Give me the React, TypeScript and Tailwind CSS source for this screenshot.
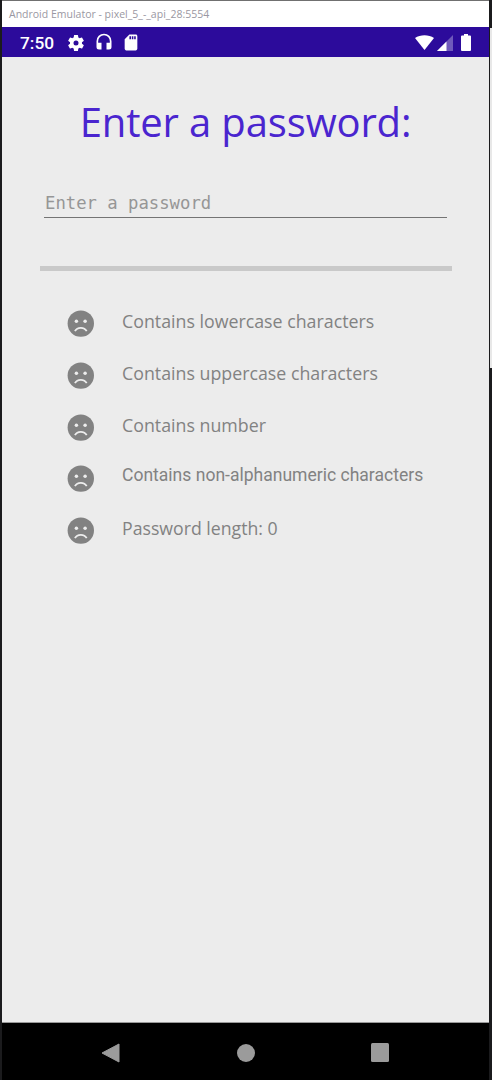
import React from "react";

const rules = [
  { label: "Contains lowercase characters", text: "font-['Open_Sans',sans-serif] text-[17.8px] -mt-[5px]" },
  { label: "Contains uppercase characters", text: "font-['Open_Sans',sans-serif] text-[17.8px] -mt-[5px]" },
  { label: "Contains number", text: "font-['Open_Sans',sans-serif] text-[17.8px] -mt-[5px]" },
  { label: "Contains non-alphanumeric characters", text: "font-[Roboto,sans-serif] text-[17.55px] -mt-[8px]" },
  { label: "Password length: 0", text: "font-['Open_Sans',sans-serif] text-[17.7px] -mt-[5px]" },
];

function SadFace() {
  return (
    <svg viewBox="0 0 27 27" className="block h-[27px] w-[27px] shrink-0">
      <circle cx="13.8" cy="13.6" r="13.2" fill="#828282" />
      <circle cx="9.4" cy="11.2" r="1.75" fill="#ededed" />
      <circle cx="18.1" cy="11.2" r="1.75" fill="#ededed" />
      <path d="M7.9 21.2C10.2 16.7 17.4 16.7 19.7 21.2" fill="none" stroke="#ededed" strokeWidth="1.7" />
    </svg>
  );
}

function StatusBar() {
  return (
    <div className="flex h-[30px] items-center bg-[#2c0b9b] pl-[18px] pr-[18px] text-white">
      <span className="w-[46px] pt-px font-[Roboto,sans-serif] text-[17.3px] font-medium leading-[30px]">7:50</span>
      <svg viewBox="0 0 24 24" className="mt-px h-[20px] w-[20px]" fill="currentColor">
        <path d="M19.14 12.94c.04-.3.06-.61.06-.94s-.02-.64-.07-.94l2.03-1.58a.49.49 0 0 0 .12-.61l-1.92-3.32a.49.49 0 0 0-.59-.22l-2.39.96c-.5-.38-1.03-.7-1.62-.94l-.36-2.54a.48.48 0 0 0-.48-.41h-3.84c-.24 0-.43.17-.47.41l-.36 2.54c-.59.24-1.13.57-1.62.94l-2.39-.96a.48.48 0 0 0-.59.22L2.74 8.87a.48.48 0 0 0 .12.61l2.03 1.58c-.05.3-.09.63-.09.94s.02.64.07.94l-2.03 1.58a.49.49 0 0 0-.12.61l1.92 3.32c.12.22.37.29.59.22l2.39-.96c.5.38 1.03.7 1.62.94l.36 2.54c.05.24.24.41.48.41h3.84c.24 0 .44-.17.47-.41l.36-2.54c.59-.24 1.13-.56 1.62-.94l2.39.96c.22.08.47 0 .59-.22l1.92-3.32a.48.48 0 0 0-.12-.61zM12 15a3 3 0 1 1 0-6 3 3 0 0 1 0 6z" />
      </svg>
      <svg viewBox="0 0 24 24" className="ml-[8px] h-[20px] w-[20px]" fill="currentColor">
        <path d="M12 2a9 9 0 0 0-9 9v7a3 3 0 0 0 3 3h3v-8H5v-2a7 7 0 0 1 14 0v2h-4v8h3a3 3 0 0 0 3-3v-7a9 9 0 0 0-9-9z" />
      </svg>
      <svg viewBox="0 0 24 24" className="ml-[7px] mt-px h-[19px] w-[20px]" fill="currentColor">
        <path d="M18 2h-8L4 8v12c0 1.1.9 2 2 2h12c1.1 0 2-.9 2-2V4c0-1.1-.9-2-2-2zm-6 6h-2V4h2v4zm3 0h-2V4h2v4zm3 0h-2V4h2v4z" />
      </svg>
      <svg viewBox="0 0 19 15" className="ml-auto h-[15px] w-[19px]" fill="currentColor">
        <path d="M9.5 15L0 3C5.2-.6 13.8-.6 19 3z" />
      </svg>
      <svg viewBox="0 0 16 16" className="ml-[3px] mt-px h-[16px] w-[16px]" fill="currentColor">
        <path d="M0 16L16 0v16z" opacity=".32" />
        <path d="M0 16L9.5 6.5V16z" />
      </svg>
      <svg viewBox="0 0 10 17" className="ml-[8px] h-[17px] w-[10px]" fill="currentColor">
        <path d="M3 0h4v1.5h2q1 0 1 1v13.5q0 1-1 1H1q-1 0-1-1V2.5q0-1 1-1h2z" />
      </svg>
    </div>
  );
}

export default function App() {
  return (
    <div className="flex h-[1080px] w-[492px] overflow-hidden bg-[#1b1b1d]">
      <div className="w-[2px] shrink-0" />
      <div className="flex w-[487px] shrink-0 flex-col">
        <div className="flex h-[28px] items-center border-b border-t border-b-[#a69bd0] border-t-[#707070] bg-white pl-[7px]">
          <span className="whitespace-nowrap font-['Open_Sans',sans-serif] text-[10.5px] leading-[26px] text-[#9a98a2]">
            Android Emulator - pixel_5_-_api_28:5554
          </span>
        </div>
        <div className="-mt-px">
          <StatusBar />
        </div>
        <main className="flex flex-1 flex-col bg-[#ececec] pt-[35px]">
          <h1 className="whitespace-nowrap text-center font-['Open_Sans',sans-serif] text-[40px] leading-[60px] tracking-[-0.14px] text-[#4a25cf]">
            Enter a password:
          </h1>
          <div className="ml-[42px] mt-[38px] flex h-[28px] w-[403px] items-center border-b border-[#747474]">
            <span className="whitespace-nowrap pb-[2px] pl-px font-['DejaVu_Sans_Mono',monospace] text-[17.25px] leading-[26px] text-[#969696]">
              Enter a password
            </span>
          </div>
          <div className="ml-[38px] mt-[48px] h-[5px] w-[412px] bg-[#c9c9c9]" />
          <ul className="mt-[39px] flex flex-col gap-[24.8px] pl-[65px]">
            {rules.map((rule) => (
              <li key={rule.label} className="flex h-[27px] items-center gap-[28px]">
                <SadFace />
                <span className={"whitespace-nowrap leading-[26px] text-[#828282] " + rule.text}>{rule.label}</span>
              </li>
            ))}
          </ul>
        </main>
        <nav className="flex h-[58px] items-center justify-between border-t border-[#999] bg-black pl-[99px] pr-[100px]">
          <svg viewBox="0 0 19 20" className="mt-[2px] h-[20px] w-[19px]">
            <path d="M18 1L1 10l17 9z" fill="#9b9b9b" stroke="#9b9b9b" strokeLinejoin="round" />
          </svg>
          <div className="mt-[2px] h-[18px] w-[18px] rounded-full bg-[#9b9b9b]" />
          <div className="mt-[2px] h-[19px] w-[18px] rounded-[1.5px] bg-[#9b9b9b]" />
        </nav>
      </div>
      <div className="w-px shrink-0" />
      <div className="flex w-[2px] shrink-0 flex-col">
        <div className="h-[28px]" />
        <div className="h-[340px] bg-[#e8e8e8]" />
      </div>
    </div>
  );
}
